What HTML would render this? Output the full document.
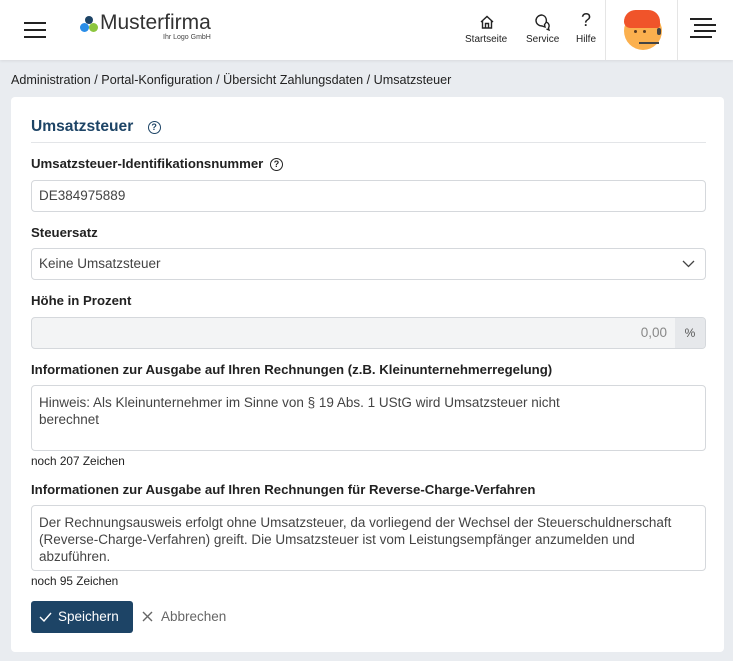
<!DOCTYPE html>
<html><head><meta charset="utf-8"><style>
*{box-sizing:border-box;margin:0;padding:0}
body{width:733px;height:661px;background:#e9ecf0;font-family:"Liberation Sans",sans-serif;color:#222;position:relative;overflow:hidden}
.hdr{position:absolute;left:0;top:0;width:733px;height:60px;background:#fff;box-shadow:0 1px 3px rgba(0,0,0,.08)}
.ab{position:absolute}
.bc{position:absolute;left:11px;top:73px;font-size:12.6px;color:#222}
.card{position:absolute;left:11px;top:97px;width:713px;height:555px;background:#fff;border-radius:4px}
.lbl{position:absolute;left:20px;font-size:13.2px;font-weight:bold;color:#222}
.inp{position:absolute;left:20px;width:675px;border:1px solid #d5d8dc;border-radius:4px;font-size:13.5px;color:#444;padding:0 7px}
.small{position:absolute;left:20px;font-size:11.8px;color:#222}
.q{display:inline-block;width:13px;height:13px;border:1.3px solid #222;border-radius:50%;font-size:9px;text-align:center;line-height:11px;font-weight:bold;vertical-align:1px}
</style></head><body>
<div class="hdr">
 <div class="ab" style="left:24px;top:22px;width:22px;height:2px;background:#222;box-shadow:0 7px 0 #222,0 14px 0 #222"></div>
 <div class="ab" style="left:85px;top:16px;width:8px;height:8px;border-radius:50%;background:#1d4466"></div>
 <div class="ab" style="left:80px;top:23px;width:9px;height:9px;border-radius:50%;background:#2a8ee8"></div>
 <div class="ab" style="left:89px;top:23px;width:9px;height:9px;border-radius:50%;background:#8cc63f"></div>
 <div class="ab" style="left:100px;top:11px;font-size:21px;color:#333">Musterfirma</div>
 <div class="ab" style="left:163px;top:34px;font-size:7px;color:#444">Ihr Logo GmbH</div>
 <svg class="ab" style="left:479px;top:14px" width="16" height="16" viewBox="0 0 16 16" fill="none" stroke="#222" stroke-width="1.4"><path d="M2 8L8 2.5 14 8M3.5 7v7h9V7M6.5 14V9.5h3V14"/></svg>
 <div class="ab" style="left:465px;top:34px;font-size:10px">Startseite</div>
 <svg class="ab" style="left:534px;top:13px" width="18" height="18" viewBox="0 0 18 18" fill="none" stroke="#222" stroke-width="1.4"><path d="M8 2a6 5.5 0 1 0 0 11l3 1-0.5-2.5A5.5 5.5 0 0 0 8 2z"/><path d="M12 9a4 4 0 0 1 2.5 6l.5 2-2.5-1"/></svg>
 <div class="ab" style="left:526px;top:34px;font-size:10px">Service</div>
 <div class="ab" style="left:581px;top:10px;font-size:18px">?</div>
 <div class="ab" style="left:576px;top:34px;font-size:10px">Hilfe</div>
 <div class="ab" style="left:605px;top:0;width:1px;height:60px;background:#e5e5e5"></div>
 <div class="ab" style="left:677px;top:0;width:1px;height:60px;background:#e5e5e5"></div>
 <div class="ab" style="left:624px;top:12px;width:38px;height:38px;border-radius:50%;background:#fbb04e"></div>
 <div class="ab" style="left:624px;top:10px;width:36px;height:18px;border-radius:18px 18px 4px 10px;background:#f0542a"></div>
 <div class="ab" style="left:634px;top:30px;width:3px;height:3px;border-radius:50%;background:#5a3a20;box-shadow:9px 0 0 #5a3a20"></div>
 <div class="ab" style="left:657px;top:28px;width:4px;height:7px;border-radius:2px;background:#444"></div>
 <div class="ab" style="left:639px;top:42px;width:20px;height:1.5px;background:#444"></div>
 <div class="ab" style="left:690px;top:18px;width:22px;height:2px;background:#222;box-shadow:4px 6px 0 #222,4px 12px 0 #222,0 18px 0 #222"></div>
</div>
<div class="bc">Administration / Portal-Konfiguration / Übersicht Zahlungsdaten / Umsatzsteuer</div>
<div class="card">
 <div class="ab" style="left:20px;top:21px;font-size:15.6px;font-weight:bold;color:#1d4466">Umsatzsteuer <span class="q" style="margin-left:10px;border-color:#1d4466;color:#1d4466">?</span></div>
 <div class="ab" style="left:20px;top:45px;width:675px;height:1px;background:#e3e5e8"></div>
 <div class="lbl" style="top:59px">Umsatzsteuer-Identifikationsnummer <span class="q" style="margin-left:3px;font-weight:bold">?</span></div>
 <div class="inp" style="top:83px;height:32px;line-height:30px">DE384975889</div>
 <div class="lbl" style="top:128px">Steuersatz</div>
 <div class="inp" style="top:151px;height:32px;line-height:30px">Keine Umsatzsteuer
  <svg class="ab" style="right:10px;top:11px" width="13" height="8" viewBox="0 0 13 8" fill="none" stroke="#444" stroke-width="1.3"><path d="M1 1l5.5 5.5L12 1"/></svg></div>
 <div class="lbl" style="top:196px">Höhe in Prozent</div>
 <div class="inp" style="top:220px;height:32px;line-height:30px;background:#f3f4f5;text-align:right;padding-right:38px;color:#888;overflow:hidden">0,00
  <div class="ab" style="right:0;top:0;width:30px;height:30px;background:#e6e8eb;text-align:center;color:#555;font-size:12px">%</div></div>
 <div class="lbl" style="top:265px">Informationen zur Ausgabe auf Ihren Rechnungen (z.B. Kleinunternehmerregelung)</div>
 <div class="inp" style="top:288px;height:66px;padding-top:8px;line-height:17px">Hinweis: Als Kleinunternehmer im Sinne von § 19 Abs. 1 UStG wird Umsatzsteuer nicht<br>berechnet</div>
 <div class="small" style="top:357px">noch 207 Zeichen</div>
 <div class="lbl" style="top:385px">Informationen zur Ausgabe auf Ihren Rechnungen für Reverse-Charge-Verfahren</div>
 <div class="inp" style="top:408px;height:66px;padding-top:8px;line-height:17px">Der Rechnungsausweis erfolgt ohne Umsatzsteuer, da vorliegend der Wechsel der Steuerschuldnerschaft<br>(Reverse-Charge-Verfahren) greift. Die Umsatzsteuer ist vom Leistungsempfänger anzumelden und<br>abzuführen.</div>
 <div class="small" style="top:477px">noch 95 Zeichen</div>
 <div class="ab" style="left:20px;top:504px;width:102px;height:32px;background:#1d4466;border-radius:3px;color:#fff;font-size:13.5px;line-height:32px;padding-left:27px">Speichern
  <svg class="ab" style="left:8px;top:11px" width="13" height="10" viewBox="0 0 13 10" fill="none" stroke="#fff" stroke-width="1.4"><path d="M1 5l4 4 7-8"/></svg></div>
 <svg class="ab" style="left:131px;top:514px" width="11" height="11" viewBox="0 0 11 11" stroke="#666" stroke-width="1.4"><path d="M1 1l9 9M10 1l-9 9"/></svg>
 <div class="ab" style="left:150px;top:512px;font-size:13.5px;color:#666">Abbrechen</div>
</div>
</body></html>
